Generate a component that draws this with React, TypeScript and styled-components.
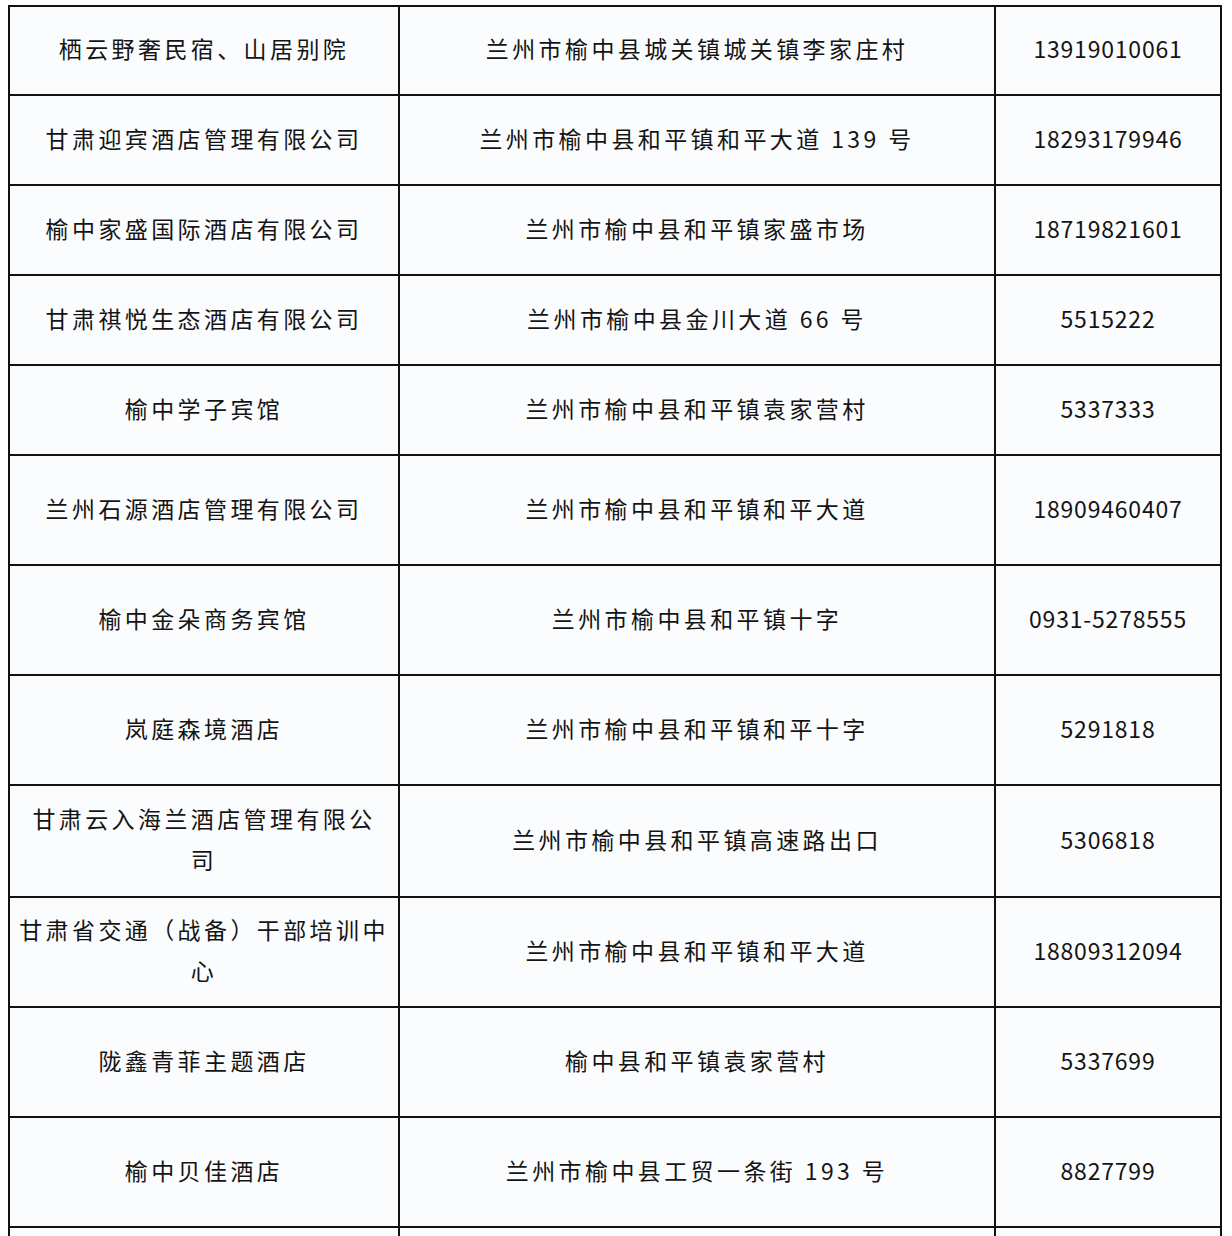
import React from "react";
import styled, { createGlobalStyle } from "styled-components";

const GlobalStyle = createGlobalStyle`
  html, body {
    margin: 0;
    padding: 0;
    background: #ffffff;
  }
  body {
    font-family: "Noto Sans CJK SC", "Noto Sans", sans-serif;
    color: #141414;
  }
`;

const Page = styled.div`
  padding: 5px 0 0 8px;
  height: 1236px;
  overflow: hidden;
  box-sizing: border-box;
`;

const Table = styled.div`
  width: 1214px;
  display: flex;
  flex-direction: column;
  gap: 2px;
  padding: 2px;
  box-sizing: border-box;
  background: #121212;
`;

const Row = styled.div<{ $h: number }>`
  display: grid;
  grid-template-columns: 388px 594px 224px;
  gap: 2px;
  height: ${(p) => p.$h}px;
`;

const Cell = styled.div<{ $kind?: "name" | "addr" | "phone" }>`
  display: flex;
  align-items: center;
  justify-content: center;
  text-align: center;
  background: #fbfcfe;
  padding: 0 10px 4px;
  box-sizing: border-box;
  font-size: 23px;
  line-height: 41px;
  font-weight: 400;
  letter-spacing: ${(p) => (p.$kind === "phone" ? "0.8px" : "3.4px")};
  white-space: pre;
`;

type Entry = { name: React.ReactNode; addr: string; phone: string; h: number };

const rows: Entry[] = [
  { name: "栖云野奢民宿、山居别院", addr: "兰州市榆中县城关镇城关镇李家庄村", phone: "13919010061", h: 87 },
  { name: "甘肃迎宾酒店管理有限公司", addr: "兰州市榆中县和平镇和平大道 139 号", phone: "18293179946", h: 88 },
  { name: "榆中家盛国际酒店有限公司", addr: "兰州市榆中县和平镇家盛市场", phone: "18719821601", h: 88 },
  { name: "甘肃祺悦生态酒店有限公司", addr: "兰州市榆中县金川大道 66 号", phone: "5515222", h: 88 },
  { name: "榆中学子宾馆", addr: "兰州市榆中县和平镇袁家营村", phone: "5337333", h: 88 },
  { name: "兰州石源酒店管理有限公司", addr: "兰州市榆中县和平镇和平大道", phone: "18909460407", h: 108 },
  { name: "榆中金朵商务宾馆", addr: "兰州市榆中县和平镇十字", phone: "0931-5278555", h: 108 },
  { name: "岚庭森境酒店", addr: "兰州市榆中县和平镇和平十字", phone: "5291818", h: 108 },
  {
    name: (
      <>
        甘肃云入海兰酒店管理有限公
        <br />司
      </>
    ),
    addr: "兰州市榆中县和平镇高速路出口",
    phone: "5306818",
    h: 110,
  },
  {
    name: (
      <>
        甘肃省交通（战备）干部培训中
        <br />心
      </>
    ),
    addr: "兰州市榆中县和平镇和平大道",
    phone: "18809312094",
    h: 108,
  },
  { name: "陇鑫青菲主题酒店", addr: "榆中县和平镇袁家营村", phone: "5337699", h: 108 },
  { name: "榆中贝佳酒店", addr: "兰州市榆中县工贸一条街 193 号", phone: "8827799", h: 108 },
  { name: "", addr: "", phone: "", h: 108 },
];

export default function App() {
  return (
    <>
      <GlobalStyle />
      <Page>
        <Table>
          {rows.map((r, i) => (
            <Row key={i} $h={r.h}>
              <Cell $kind="name">{r.name}</Cell>
              <Cell $kind="addr">{r.addr}</Cell>
              <Cell $kind="phone">{r.phone}</Cell>
            </Row>
          ))}
        </Table>
      </Page>
    </>
  );
}
